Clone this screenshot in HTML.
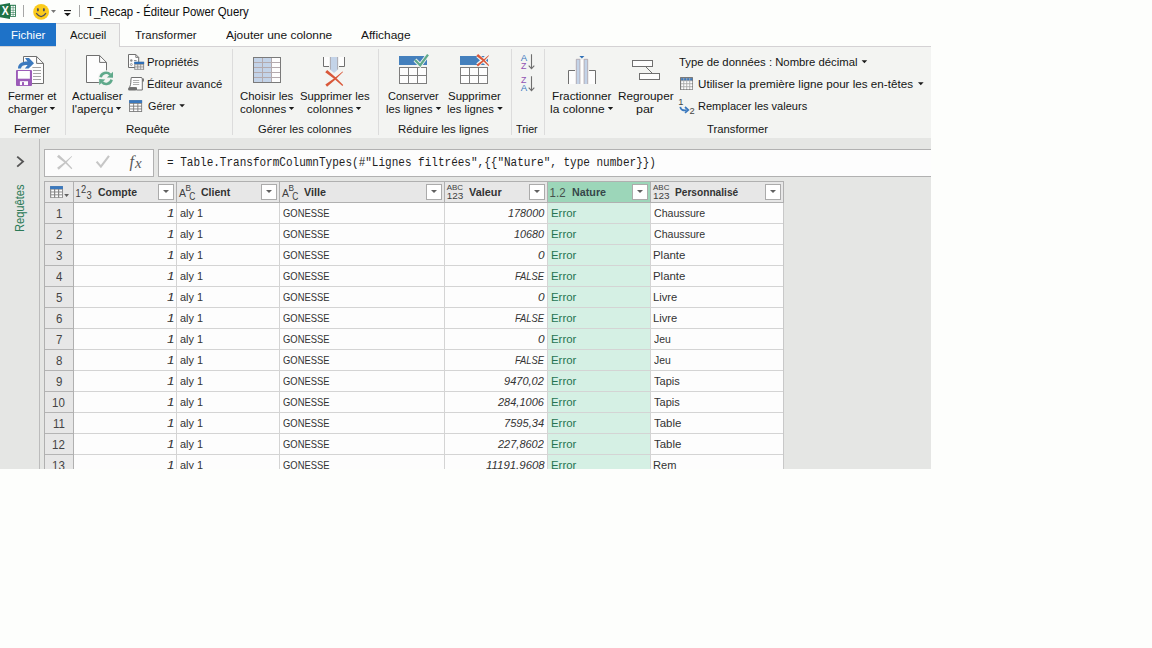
<!DOCTYPE html>
<html lang="fr"><head><meta charset="utf-8"><title>T_Recap - Éditeur Power Query</title>
<style>
*{box-sizing:border-box}
html,body{margin:0;padding:0;background:#fdfefc}
body{width:1152px;height:648px;overflow:hidden;position:relative;font-family:"Liberation Sans",sans-serif;font-size:12px;color:#222}
#app{position:absolute;left:0;top:0;width:931px;height:469px;overflow:hidden;background:#e5e6e4}
.t{position:absolute;white-space:pre;transform-origin:0 0;display:block}
svg{position:absolute;overflow:visible}
#titlebar{position:absolute;left:0;top:0;width:931px;height:23px;background:#fdfefc}
#tabs{position:absolute;left:0;top:23px;width:931px;height:24px;background:#fdfefc;border-bottom:1px solid #d4d2d4}
#tab-file{position:absolute;left:0;top:0;width:56px;height:23px;background:#1e72c8}
#tab-home{position:absolute;left:56px;top:0;width:64px;height:24px;background:#f3f4f2;border:1px solid #d4d2d4;border-bottom:none;border-left:none}
#ribbon{position:absolute;left:0;top:47px;width:931px;height:91px;background:#f3f4f2}
.sep{position:absolute;top:49px;width:1px;height:86px;background:#dcdcdc}
#side{position:absolute;left:0;top:138px;width:39px;height:331px;background:#e5e6e4}
#sideline{position:absolute;left:39px;top:139px;width:1px;height:330px;background:#bcbcbc}
#fxbtns{position:absolute;left:44px;top:149px;width:110px;height:28px;background:#fcfcfc;border:1px solid #b1b1b1}
#fxbox{position:absolute;left:158px;top:149px;width:780px;height:28px;background:#fdfdfd;border:1px solid #b1b1b1}
.hl{position:absolute;height:1px;background:#d4d4d4}
.vl{position:absolute;width:1px;background:#d4d4d4}
.fb{position:absolute;top:184px;width:16px;height:16px;background:#fff;border:1px solid #ababab}
.fb:after{content:"";position:absolute;left:3.6px;top:5.2px;border:3.5px solid transparent;border-top:3.5px solid #606060;border-bottom:none;width:0;height:0}
.side{transform-origin:0 0}
</style></head>
<body>
<div id="app">
<header id="titlebar"><svg style="left:0px;top:0px" width="96" height="23" viewBox="0 0 96 23" >
<polygon points="0,4.8 10,3.1 10,19 0,17.3" fill="#1f7246"/>
<rect x="10" y="4.8" width="5.9" height="12" fill="#1f7246"/>
<g fill="#fff"><rect x="10.8" y="5.8" width="2" height="1.8"/><rect x="13.3" y="5.8" width="1.8" height="1.8"/>
<rect x="10.8" y="8.1" width="2" height="1.8"/><rect x="13.3" y="8.1" width="1.8" height="1.8"/>
<rect x="10.8" y="10.4" width="2" height="1.8"/><rect x="13.3" y="10.4" width="1.8" height="1.8"/>
<rect x="10.8" y="12.7" width="2" height="1.8"/><rect x="13.3" y="12.7" width="1.8" height="1.8"/>
<rect x="10.8" y="15" width="2" height="1"/><rect x="13.3" y="15" width="1.8" height="1"/></g>
<text x="5.2" y="15.4" font-family="'Liberation Sans',sans-serif" font-weight="bold" font-size="12.4" fill="#fff" text-anchor="middle" textLength="7" lengthAdjust="spacingAndGlyphs">X</text>
<rect x="23" y="5" width="1" height="12" fill="#a6a6a6"/>
<circle cx="41.1" cy="11.9" r="7.9" fill="#fbcb1c"/>
<ellipse cx="37.9" cy="9.8" rx="1" ry="1.7" fill="#4b4c62"/><ellipse cx="43.9" cy="9.8" rx="1" ry="1.7" fill="#4b4c62"/>
<path d="M36.2 13.2 Q41.1 20 46 13.2" stroke="#4b4c62" stroke-width="1.3" fill="none"/>
<polygon points="51,10 56,10 53.5,12.9" fill="#777"/>
<rect x="64" y="10" width="7" height="1.15" fill="#1a1a1a"/>
<polygon points="64.2,12.9 70.8,12.9 67.5,16.3" fill="#1a1a1a"/>
<rect x="79" y="5" width="1" height="12" fill="#a6a6a6"/>
</svg><span class="t" style="left:87.14px;top:6px;font-size:12.6px;line-height:12.6px;color:#0c0c0c;transform:scaleX(0.9025);">T_Recap - Éditeur Power Query</span></header>
<nav class="w" aria-label="Onglets"><div id="tabs"><div id="tab-file"></div><div id="tab-home"></div></div>
<span class="t" style="left:10.54px;top:30px;font-size:11.3px;line-height:11.3px;color:#fff;transform:scaleX(1.0130);">Fichier</span>
<span class="t" style="left:70.14px;top:30px;font-size:11.3px;line-height:11.3px;color:#141414;transform:scaleX(0.9946);">Accueil</span>
<span class="t" style="left:134.55px;top:30px;font-size:11.3px;line-height:11.3px;color:#141414;transform:scaleX(1.0087);">Transformer</span>
<span class="t" style="left:226.13px;top:30px;font-size:11.3px;line-height:11.3px;color:#141414;transform:scaleX(1.0574);">Ajouter une colonne</span>
<span class="t" style="left:361.23px;top:30px;font-size:11.3px;line-height:11.3px;color:#141414;transform:scaleX(1.0568);">Affichage</span></nav>
<section class="w" aria-label="Ruban Accueil"><div id="ribbon"></div>
<div class="sep" style="left:65px"></div>
<div class="sep" style="left:232px"></div>
<div class="sep" style="left:378px"></div>
<div class="sep" style="left:511px"></div>
<div class="sep" style="left:544px"></div>
<svg style="left:0px;top:47px" width="931" height="91" viewBox="0 47 931 91" >
<path d="M23.5 56.5 H36.6 L43.5 63.4 V83.5 H23.5 Z" fill="#fdfdfd" stroke="#6f6f6f" stroke-width="1"/>
<path d="M36.6 56.5 V63.4 H43.5" fill="none" stroke="#6f6f6f" stroke-width="1"/>
<g stroke="#a4a4a4" stroke-width="1"><path d="M32.4 67.5 H41 M33 70.5 H41 M33 73.5 H41 M33 76.5 H41 M33 79.5 H41"/></g>
<rect x="22.6" y="63.8" width="2" height="6.4" fill="#f3f4f2"/>
<path d="M18 68.6 C18 63.8 21.5 61.6 27.5 61.6 L25 58.1 H29 L34 63.2 L28.6 68.6 H24.8 L27.6 65 C23.6 64.8 21.3 65.6 21 68.6 Z" fill="#3b79be"/>
<rect x="16" y="70" width="16" height="16" rx="1" fill="#9b5bb8"/>
<rect x="17.9" y="71" width="12" height="7.7" fill="#fdfdfd"/>
<rect x="19.9" y="81.2" width="8.1" height="3.9" fill="#fdfdfd"/>
<rect x="22" y="82.1" width="2" height="3" fill="#9b5bb8"/>

<path d="M86.5 55.5 H99.6 L106.5 62.4 V82.5 H86.5 Z" fill="#fdfdfd" stroke="#6f6f6f" stroke-width="1"/>
<path d="M99.6 55.5 V62.4 H106.5" fill="none" stroke="#6f6f6f" stroke-width="1"/>
<circle cx="106.1" cy="78.4" r="8.2" fill="#f3f4f2"/>
<path d="M100.6 77.2 A5.6 5.6 0 0 1 110.2 74.6" fill="none" stroke="#5fa98b" stroke-width="2.6"/>
<polygon points="113,71.8 113,77.8 106.9,77.4" fill="#5fa98b"/>
<path d="M111.6 79.6 A5.6 5.6 0 0 1 102 82.2" fill="none" stroke="#5fa98b" stroke-width="2.6"/>
<polygon points="99.2,85 99.2,79 105.3,79.4" fill="#5fa98b"/>

<path d="M128.5 54.5 H135.8 L138.7 57.4 V67.5 H128.5 Z" fill="#fdfdfd" stroke="#6f6f6f" stroke-width="1"/>
<path d="M135.8 54.5 V57.4 H138.7" fill="none" stroke="#6f6f6f" stroke-width="0.9"/>
<circle cx="131.3" cy="60.5" r="1.2" fill="#8a8a8a"/><circle cx="131.3" cy="64.5" r="1" fill="none" stroke="#8a8a8a" stroke-width="0.8"/>
<rect x="134" y="60" width="2.6" height="0.9" fill="#8a8a8a"/>
<rect x="134.3" y="61.8" width="9.8" height="8" fill="#858585"/>
<rect x="134.3" y="61.8" width="9.8" height="2.2" fill="#2f6fb6"/>
<g fill="#fdfdfd"><rect x="135.2" y="64.7" width="2.2" height="1.1"/><rect x="138.2" y="64.7" width="2.2" height="1.1"/><rect x="141.1" y="64.7" width="2.1" height="1.1"/>
<rect x="135.2" y="66.5" width="2.2" height="1.1"/><rect x="138.2" y="66.5" width="2.2" height="1.1"/><rect x="141.1" y="66.5" width="2.1" height="1.1"/>
<rect x="135.2" y="68.2" width="2.2" height="0.9"/><rect x="138.2" y="68.2" width="2.2" height="0.9"/><rect x="141.1" y="68.2" width="2.1" height="0.9"/></g>

<path d="M131.3 77.5 H141 Q142.3 77.5 142.3 78.8 V90 H136.5 V87.6 H129.2 C130.6 86 130.9 83 130.9 80 Z" fill="#fdfdfd" stroke="#6f6f6f" stroke-width="1"/>
<path d="M142.3 78.6 H143.9 V81.6 H142.3 Z" fill="#6f6f6f"/>
<rect x="128" y="87.5" width="8.7" height="3.1" rx="1.5" fill="#6f6f6f"/>
<g stroke="#a6a6a6" stroke-width="0.9"><path d="M133 80.5 H139.2 M133 82.5 H139.2 M133 84.5 H139.2"/></g>

<rect x="129.1" y="100.2" width="13" height="11.8" fill="#7d7d7d"/>
<rect x="129.1" y="100.2" width="13" height="2.8" fill="#3b79be"/>
<g fill="#fdfdfd"><rect x="130" y="103.8" width="3.2" height="1.9"/><rect x="134.1" y="103.8" width="3.3" height="1.9"/><rect x="138.3" y="103.8" width="2.9" height="1.9"/>
<rect x="130" y="106.6" width="3.2" height="1.9"/><rect x="134.1" y="106.6" width="3.3" height="1.9"/><rect x="138.3" y="106.6" width="2.9" height="1.9"/>
<rect x="130" y="109.4" width="3.2" height="1.7"/><rect x="134.1" y="109.4" width="3.3" height="1.7"/><rect x="138.3" y="109.4" width="2.9" height="1.7"/></g>

<rect x="253.5" y="57.5" width="27" height="25" fill="#fdfdfd"/>
<rect x="253.5" y="57.5" width="18" height="25" fill="#c3d3e8"/>
<g stroke="#b3aaae" stroke-width="1"><path d="M262.5 58 V82 M271.5 58 V82 M254 62.5 H280 M254 67.5 H280 M254 72.5 H280 M254 77.5 H280"/></g>
<rect x="253.5" y="57.5" width="27" height="25" fill="none" stroke="#7a7a7a" stroke-width="1"/>

<path d="M323.5 57 V66.5 H329.5 V57 Z M338.5 57 V66.5 H344.5 V57 Z" fill="#fdfdfd" stroke="none"/>
<path d="M323.5 57 V66.5 H329 M339 66.5 H344.5 V57" fill="none" stroke="#6f6f6f" stroke-width="1"/>
<path d="M330 57 H338 V69.5 L334 73 L330 69.5 Z" fill="#c3d3e8"/>
<path d="M330.4 57 V69.5 M337.6 57 V69.5" stroke="#aaa6ac" stroke-width="0.9" fill="none"/>
<path d="M325.22 72.33 Q334.39 78.52 342.39 86.08 L343.21 85.12 Q335.79 76.92 327.18 70.07 Z M327.07 86.64 Q335.55 79.91 343.01 71.95 L342.59 71.45 Q334.47 78.62 325.33 84.56 Z" fill="#d9583a"/>

<rect x="399" y="56" width="28" height="9" fill="#4480bd"/>
<rect x="399.5" y="67.5" width="27" height="16" fill="#fdfdfd" stroke="#7d7d7d" stroke-width="1"/>
<path d="M408.5 68 V83 M417.5 68 V83 M400 75.5 H426" stroke="#7d7d7d" stroke-width="1" fill="none"/>
<path d="M415 60 L420.2 65.2 L428 54.6" stroke="#f3f4f2" stroke-width="4" fill="none"/>
<path d="M415 60 L420.2 65.2 L428 54.6" stroke="#5fa98b" stroke-width="2.3" fill="none"/>
<rect x="460" y="56" width="28" height="9" fill="#4480bd"/>
<rect x="460.5" y="67.5" width="27" height="16" fill="#fdfdfd" stroke="#7d7d7d" stroke-width="1"/>
<path d="M469.5 68 V83 M478.5 68 V83 M461 75.5 H487" stroke="#7d7d7d" stroke-width="1" fill="none"/>
<path d="M477.6 55.4 L488.4 65.2 M488.2 55.8 L477.6 65" stroke="#f3f4f2" stroke-width="4" fill="none"/><path d="M476.32 55.96 Q482.98 60.32 488.43 66.00 L489.17 65.20 Q484.23 58.95 478.08 54.04 Z M477.97 66.48 Q484.00 61.70 488.99 55.72 L488.61 55.28 Q483.05 60.60 476.43 64.72 Z" fill="#d9583a"/><path d="M531.5 54.3 V68.9 M528.7 65.7 L531.5 68.60000000000001 L534.3 65.7" stroke="#6f6f6f" stroke-width="1.1" fill="none"/><path d="M531.5 76.3 V90.9 M528.7 87.7 L531.5 90.60000000000001 L534.3 87.7" stroke="#6f6f6f" stroke-width="1.1" fill="none"/><g font-family="'Liberation Sans',sans-serif" font-size="9.6" text-anchor="middle">
<text x="524" y="60.6" fill="#3b79be" textLength="6.4" lengthAdjust="spacingAndGlyphs">A</text>
<text x="523.6" y="69" fill="#9152b2" textLength="5.4" lengthAdjust="spacingAndGlyphs">Z</text>
<text x="523.6" y="83" fill="#9152b2" textLength="5.4" lengthAdjust="spacingAndGlyphs">Z</text>
<text x="524" y="91" fill="#3b79be" textLength="6.4" lengthAdjust="spacingAndGlyphs">A</text></g>
<path d="M568.5 84 V70.5 H575.5 V84 Z M588.5 84 V70.5 H595.5 V84 Z" fill="#fdfdfd"/>
<path d="M568.5 84 V70.5 H575 M589 70.5 H595.5 V84" fill="none" stroke="#6f6f6f" stroke-width="1"/>
<rect x="576" y="59" width="4.2" height="25" fill="#c3d3e8"/><rect x="583.8" y="59" width="4.2" height="25" fill="#c3d3e8"/>
<rect x="580.2" y="60" width="3.6" height="24" fill="#fdfdfd"/>
<path d="M576.3 84 V59.3 H579.9 V84 M584.1 84 V59.3 H587.7 V84" stroke="#b3a6aa" stroke-width="0.8" fill="none"/>
<polygon points="579.4,56 584.4,56 581.9,58.4" fill="#2f6fb6"/>

<rect x="632.5" y="60.5" width="20" height="6" fill="#fdfdfd" stroke="#6f6f6f" stroke-width="1"/>
<rect x="639.5" y="73.5" width="20" height="6" fill="#fdfdfd" stroke="#6f6f6f" stroke-width="1"/>
<path d="M646 67 L652 73" stroke="#6f6f6f" stroke-width="1" fill="none"/>
<rect x="680" y="77" width="13" height="13" fill="#a9a9a9"/><path d="M680.5 77.5 H692.5 V89.5 H680.5 Z" fill="none" stroke="#7a7a7a" stroke-width="1"/><rect x="681.2" y="78.2" width="2.1" height="2.1" fill="#3b79be"/><rect x="684.2" y="78.2" width="2.1" height="2.1" fill="#3b79be"/><rect x="687.2" y="78.2" width="2.1" height="2.1" fill="#3b79be"/><rect x="690.2" y="78.2" width="2.1" height="2.1" fill="#3b79be"/><rect x="681.2" y="81.2" width="2.1" height="2.1" fill="#fdfdfd"/><rect x="684.2" y="81.2" width="2.1" height="2.1" fill="#fdfdfd"/><rect x="687.2" y="81.2" width="2.1" height="2.1" fill="#fdfdfd"/><rect x="690.2" y="81.2" width="2.1" height="2.1" fill="#fdfdfd"/><rect x="681.2" y="84.2" width="2.1" height="2.1" fill="#fdfdfd"/><rect x="684.2" y="84.2" width="2.1" height="2.1" fill="#fdfdfd"/><rect x="687.2" y="84.2" width="2.1" height="2.1" fill="#fdfdfd"/><rect x="690.2" y="84.2" width="2.1" height="2.1" fill="#fdfdfd"/><rect x="681.2" y="87.2" width="2.1" height="2.1" fill="#fdfdfd"/><rect x="684.2" y="87.2" width="2.1" height="2.1" fill="#fdfdfd"/><rect x="687.2" y="87.2" width="2.1" height="2.1" fill="#fdfdfd"/><rect x="690.2" y="87.2" width="2.1" height="2.1" fill="#fdfdfd"/><g font-family="'Liberation Sans',sans-serif" font-size="9.3" fill="#444">
<text x="678.3" y="104.9">1</text><text x="689.6" y="113.7">2</text></g>
<path d="M680.3 106.8 C680.6 110 683 110.6 686.6 110.2" stroke="#3b79be" stroke-width="1.8" fill="none"/>
<path d="M685 107 L688.3 110 L685 112.8" stroke="#3b79be" stroke-width="1.7" fill="none"/>
<polygon points="49.6,107 55.2,107 52.400000000000006,110.1" fill="#1a1a1a"/><polygon points="115.8,107 121.2,107 118.5,110.1" fill="#1a1a1a"/><polygon points="179.3,104.2 184.9,104.2 182.10000000000002,107.3" fill="#1a1a1a"/><polygon points="288.8,107 294.2,107 291.5,110.1" fill="#1a1a1a"/><polygon points="355.8,107 361.2,107 358.5,110.1" fill="#1a1a1a"/><polygon points="435.7,107 441.2,107 438.45,110.1" fill="#1a1a1a"/><polygon points="497.2,107 502.8,107 500.0,110.1" fill="#1a1a1a"/><polygon points="607.8,107 613.2,107 610.5,110.1" fill="#1a1a1a"/><polygon points="861.6,60.2 867.2,60.2 864.4000000000001,63.300000000000004" fill="#1a1a1a"/><polygon points="918,82.2 923.6,82.2 920.8,85.3" fill="#1a1a1a"/></svg>
<span class="t" style="left:7.57px;top:91px;font-size:11.3px;line-height:11.3px;color:#141414;transform:scaleX(0.9900);">Fermer et</span>
<span class="t" style="left:8.30px;top:104px;font-size:11.3px;line-height:11.3px;color:#141414;transform:scaleX(1.0248);">charger</span>
<span class="t" style="left:14.46px;top:124px;font-size:11.3px;line-height:11.3px;color:#141414;transform:scaleX(0.9907);">Fermer</span>
<span class="t" style="left:71.94px;top:91px;font-size:11.3px;line-height:11.3px;color:#141414;transform:scaleX(1.0204);">Actualiser</span>
<span class="t" style="left:71.59px;top:104px;font-size:11.3px;line-height:11.3px;color:#141414;transform:scaleX(1.0520);">l'aperçu</span>
<span class="t" style="left:147.15px;top:57px;font-size:11.3px;line-height:11.3px;color:#141414;transform:scaleX(1.0036);">Propriétés</span>
<span class="t" style="left:147.16px;top:79px;font-size:11.3px;line-height:11.3px;color:#141414;transform:scaleX(0.9995);">Éditeur avancé</span>
<span class="t" style="left:147.50px;top:101px;font-size:11.3px;line-height:11.3px;color:#141414;transform:scaleX(0.9570);">Gérer</span>
<span class="t" style="left:125.63px;top:124px;font-size:11.3px;line-height:11.3px;color:#141414;transform:scaleX(1.0241);">Requête</span>
<span class="t" style="left:240.28px;top:91px;font-size:11.3px;line-height:11.3px;color:#141414;transform:scaleX(1.0105);">Choisir les</span>
<span class="t" style="left:239.60px;top:104px;font-size:11.3px;line-height:11.3px;color:#141414;transform:scaleX(1.0238);">colonnes</span>
<span class="t" style="left:299.60px;top:91px;font-size:11.3px;line-height:11.3px;color:#141414;transform:scaleX(0.9989);">Supprimer les</span>
<span class="t" style="left:306.50px;top:104px;font-size:11.3px;line-height:11.3px;color:#141414;transform:scaleX(1.0238);">colonnes</span>
<span class="t" style="left:258.29px;top:124px;font-size:11.3px;line-height:11.3px;color:#141414;transform:scaleX(0.9870);">Gérer les colonnes</span>
<span class="t" style="left:387.59px;top:91px;font-size:11.3px;line-height:11.3px;color:#141414;transform:scaleX(0.9728);">Conserver</span>
<span class="t" style="left:385.77px;top:104px;font-size:11.3px;line-height:11.3px;color:#141414;transform:scaleX(0.9894);">les lignes</span>
<span class="t" style="left:447.98px;top:91px;font-size:11.3px;line-height:11.3px;color:#141414;transform:scaleX(1.0135);">Supprimer</span>
<span class="t" style="left:446.56px;top:104px;font-size:11.3px;line-height:11.3px;color:#141414;transform:scaleX(0.9938);">les lignes</span>
<span class="t" style="left:397.64px;top:124px;font-size:11.3px;line-height:11.3px;color:#141414;transform:scaleX(1.0113);">Réduire les lignes</span>
<span class="t" style="left:516.16px;top:124px;font-size:11.3px;line-height:11.3px;color:#141414;transform:scaleX(0.9514);">Trier</span>
<span class="t" style="left:551.71px;top:91px;font-size:11.3px;line-height:11.3px;color:#141414;transform:scaleX(1.0417);">Fractionner</span>
<span class="t" style="left:550.38px;top:104px;font-size:11.3px;line-height:11.3px;color:#141414;transform:scaleX(1.0604);">la colonne</span>
<span class="t" style="left:617.91px;top:91px;font-size:11.3px;line-height:11.3px;color:#141414;transform:scaleX(1.0422);">Regrouper</span>
<span class="t" style="left:636.32px;top:104px;font-size:11.3px;line-height:11.3px;color:#141414;transform:scaleX(1.1027);">par</span>
<span class="t" style="left:679.25px;top:57px;font-size:11.3px;line-height:11.3px;color:#141414;transform:scaleX(1.0009);">Type de données : Nombre décimal</span>
<span class="t" style="left:697.85px;top:79px;font-size:11.3px;line-height:11.3px;color:#141414;transform:scaleX(1.0312);">Utiliser la première ligne pour les en-têtes</span>
<span class="t" style="left:697.98px;top:101px;font-size:11.3px;line-height:11.3px;color:#141414;transform:scaleX(0.9770);">Remplacer les valeurs</span>
<span class="t" style="left:707.15px;top:124px;font-size:11.3px;line-height:11.3px;color:#141414;transform:scaleX(0.9972);">Transformer</span></section>
<aside class="w" aria-label="Requêtes"><div id="side"></div><div id="sideline"></div>
<svg style="left:10px;top:150px" width="20" height="24" viewBox="10 150 20 24" ><path d="M17.2 156.6 L23 161.6 L17.2 166.6" stroke="#555" stroke-width="1.9" fill="none"/></svg>
<span class="t side" style="left:13.6px;top:232px;font-size:12.6px;line-height:12.6px;color:#2c7a57;transform:rotate(-90deg) scaleX(0.8809)">Requêtes</span></aside>
<div class="w" id="formulabar"><div id="fxbtns"></div><div id="fxbox"></div>
<svg style="left:44px;top:149px" width="110" height="28" viewBox="44 149 110 28" >
<path d="M56.95 156.83 Q64.84 162.37 71.50 169.23 L72.30 168.37 Q66.19 160.91 58.85 154.77 Z M58.74 169.74 Q65.95 163.73 72.11 156.53 L71.69 156.07 Q64.91 162.56 57.06 167.86 Z" fill="#c6c6c6"/>
<path d="M96.6 161.6 L100.9 166.6 L109 155.8" stroke="#c6c6c6" stroke-width="2.1" fill="none"/>
<text font-family="'Liberation Serif',serif" font-style="italic" fill="#585858"><tspan x="129.6" y="166.8" font-size="16">f</tspan><tspan x="135" y="168" font-size="15">x</tspan></text>
</svg>
<span class="t" style="left:167.47px;top:157px;font-size:12px;line-height:12px;color:#1e1e1e;font-family:'Liberation Mono', monospace;transform:scaleX(0.9176);">= Table.TransformColumnTypes(#"Lignes filtrées",{{"Nature", type number}})</span></div>
<div class="w" id="grid" role="table">
<div style="position:absolute;left:73px;top:202px;width:711px;height:270px;background:#fdfdfd"></div>
<div style="position:absolute;left:44px;top:181px;width:740px;height:22px;background:#e7e7e7;border:1px solid #b0b0b0"></div>
<div style="position:absolute;left:44px;top:203px;width:30px;height:270px;background:#e7e7e7;border-left:1px solid #b0b0b0;border-right:1px solid #b0b0b0"></div>
<div style="position:absolute;left:548px;top:182px;width:102px;height:20px;background:#9cd6b9"></div>
<div style="position:absolute;left:548px;top:203px;width:102px;height:270px;background:#d5f0e4"></div>
<div class="hl" style="left:74px;top:223px;width:709px"></div>
<div class="hl" style="left:45px;top:223px;width:28px;background:#b4b4b4"></div>
<div class="hl" style="left:74px;top:244px;width:709px"></div>
<div class="hl" style="left:45px;top:244px;width:28px;background:#b4b4b4"></div>
<div class="hl" style="left:74px;top:265px;width:709px"></div>
<div class="hl" style="left:45px;top:265px;width:28px;background:#b4b4b4"></div>
<div class="hl" style="left:74px;top:286px;width:709px"></div>
<div class="hl" style="left:45px;top:286px;width:28px;background:#b4b4b4"></div>
<div class="hl" style="left:74px;top:307px;width:709px"></div>
<div class="hl" style="left:45px;top:307px;width:28px;background:#b4b4b4"></div>
<div class="hl" style="left:74px;top:328px;width:709px"></div>
<div class="hl" style="left:45px;top:328px;width:28px;background:#b4b4b4"></div>
<div class="hl" style="left:74px;top:349px;width:709px"></div>
<div class="hl" style="left:45px;top:349px;width:28px;background:#b4b4b4"></div>
<div class="hl" style="left:74px;top:370px;width:709px"></div>
<div class="hl" style="left:45px;top:370px;width:28px;background:#b4b4b4"></div>
<div class="hl" style="left:74px;top:391px;width:709px"></div>
<div class="hl" style="left:45px;top:391px;width:28px;background:#b4b4b4"></div>
<div class="hl" style="left:74px;top:412px;width:709px"></div>
<div class="hl" style="left:45px;top:412px;width:28px;background:#b4b4b4"></div>
<div class="hl" style="left:74px;top:433px;width:709px"></div>
<div class="hl" style="left:45px;top:433px;width:28px;background:#b4b4b4"></div>
<div class="hl" style="left:74px;top:454px;width:709px"></div>
<div class="hl" style="left:45px;top:454px;width:28px;background:#b4b4b4"></div>
<div class="hl" style="left:74px;top:475px;width:709px"></div>
<div class="hl" style="left:45px;top:475px;width:28px;background:#b4b4b4"></div>
<div class="vl" style="left:176px;top:203px;height:270px"></div>
<div class="vl" style="left:176px;top:182px;height:20px;background:#b0b0b0"></div>
<div class="vl" style="left:279px;top:203px;height:270px"></div>
<div class="vl" style="left:279px;top:182px;height:20px;background:#b0b0b0"></div>
<div class="vl" style="left:444px;top:203px;height:270px"></div>
<div class="vl" style="left:444px;top:182px;height:20px;background:#b0b0b0"></div>
<div class="vl" style="left:547px;top:203px;height:270px"></div>
<div class="vl" style="left:547px;top:182px;height:20px;background:#b0b0b0"></div>
<div class="vl" style="left:650px;top:203px;height:270px"></div>
<div class="vl" style="left:650px;top:182px;height:20px;background:#b0b0b0"></div>
<div class="vl" style="left:73px;top:182px;height:20px;background:#b0b0b0"></div>
<div class="vl" style="left:783px;top:203px;height:270px;background:#c8c8c8"></div>
<div class="w" role="row">
<div class="fb" style="left:158px"></div>
<div class="fb" style="left:261px"></div>
<div class="fb" style="left:426px"></div>
<div class="fb" style="left:529px"></div>
<div class="fb" style="left:632px"></div>
<div class="fb" style="left:765px"></div>
<svg style="left:44px;top:181px" width="740" height="22" viewBox="44 181 740 22" ><rect x="50.1" y="186.1" width="12.8" height="11.8" fill="#878787"/><rect x="50.1" y="186.1" width="12.8" height="3" fill="#3b79be"/><rect x="51.2" y="189.6" width="2.8" height="1.9" fill="#fdfdfd"/><rect x="55.2" y="189.6" width="2.8" height="1.9" fill="#fdfdfd"/><rect x="59.2" y="189.6" width="2.8" height="1.9" fill="#fdfdfd"/><rect x="51.2" y="192.45" width="2.8" height="1.9" fill="#fdfdfd"/><rect x="55.2" y="192.45" width="2.8" height="1.9" fill="#fdfdfd"/><rect x="59.2" y="192.45" width="2.8" height="1.9" fill="#fdfdfd"/><rect x="51.2" y="195.29999999999998" width="2.8" height="1.9" fill="#fdfdfd"/><rect x="55.2" y="195.29999999999998" width="2.8" height="1.9" fill="#fdfdfd"/><rect x="59.2" y="195.29999999999998" width="2.8" height="1.9" fill="#fdfdfd"/><polygon points="64.2,194.1 69,194.1 66.6,196.9" fill="#606060"/><g font-family="'Liberation Sans',sans-serif" font-size="10.8" fill="#3c3c3c"><text x="75.4" y="196.9" textLength="5.2" lengthAdjust="spacingAndGlyphs">1</text><text x="80.9" y="193" textLength="5.2" lengthAdjust="spacingAndGlyphs">2</text><text x="86.4" y="199" textLength="5.2" lengthAdjust="spacingAndGlyphs">3</text></g><g font-family="'Liberation Sans',sans-serif" fill="#404040"><text x="179.1" y="196.8" font-size="10.5" textLength="7" lengthAdjust="spacingAndGlyphs">A</text><text x="185.5" y="191.1" font-size="9.6" textLength="5.5" lengthAdjust="spacingAndGlyphs">B</text><text x="189.3" y="200" font-size="10.4" textLength="6.1" lengthAdjust="spacingAndGlyphs">C</text></g><g font-family="'Liberation Sans',sans-serif" fill="#404040"><text x="282.1" y="196.8" font-size="10.5" textLength="7" lengthAdjust="spacingAndGlyphs">A</text><text x="288.5" y="191.1" font-size="9.6" textLength="5.5" lengthAdjust="spacingAndGlyphs">B</text><text x="292.3" y="200" font-size="10.4" textLength="6.1" lengthAdjust="spacingAndGlyphs">C</text></g><g font-family="'Liberation Sans',sans-serif" fill="#3e3e3e"><text x="446.7" y="189.9" font-size="7.6" textLength="16.4" lengthAdjust="spacingAndGlyphs">ABC</text><text x="446.7" y="198.8" font-size="8.4" textLength="16.6" lengthAdjust="spacingAndGlyphs">123</text></g><g font-family="'Liberation Sans',sans-serif" fill="#3e3e3e"><text x="653" y="189.9" font-size="7.6" textLength="16.4" lengthAdjust="spacingAndGlyphs">ABC</text><text x="653" y="198.8" font-size="8.4" textLength="16.6" lengthAdjust="spacingAndGlyphs">123</text></g><text x="549.6" y="196.8" font-family="'Liberation Sans',sans-serif" font-size="12.6" fill="#46504c" textLength="16" lengthAdjust="spacingAndGlyphs">1.2</text></svg>
<span class="t" style="left:98.25px;top:187px;font-size:11.3px;line-height:11.3px;font-weight:bold;color:#333;transform:scaleX(0.9264);">Compte</span>
<span class="t" style="left:200.95px;top:187px;font-size:11.3px;line-height:11.3px;font-weight:bold;color:#333;transform:scaleX(0.9312);">Client</span>
<span class="t" style="left:304.04px;top:187px;font-size:11.3px;line-height:11.3px;font-weight:bold;color:#333;transform:scaleX(0.9534);">Ville</span>
<span class="t" style="left:469.04px;top:187px;font-size:11.3px;line-height:11.3px;font-weight:bold;color:#333;transform:scaleX(0.9641);">Valeur</span>
<span class="t" style="left:572.23px;top:187px;font-size:11.3px;line-height:11.3px;font-weight:bold;color:#36474a;transform:scaleX(0.9512);">Nature</span>
<span class="t" style="left:675.29px;top:187px;font-size:11.3px;line-height:11.3px;font-weight:bold;color:#333;transform:scaleX(0.8984);">Personnalisé</span>
</div>
<div class="w" role="row"><span class="t rn" style="left:55.60px;top:208px;font-size:12.4px;line-height:12.4px;color:#444;transform:scaleX(0.9300);">1</span>
<span class="t c1" style="left:166.65px;top:208px;font-size:11px;line-height:11px;font-style:italic;color:#333;transform:scaleX(1.2231);">1</span>
<span class="t c2" style="left:179.72px;top:208px;font-size:11px;line-height:11px;color:#333;transform:scaleX(0.9932);">aly 1</span>
<span class="t c3" style="left:282.94px;top:208px;font-size:11px;line-height:11px;color:#333;transform:scaleX(0.8558);">GONESSE</span>
<span class="t c4" style="left:507.72px;top:208px;font-size:11px;line-height:11px;font-style:italic;color:#333;transform:scaleX(0.9864);">178000</span>
<span class="t c5" style="left:550.92px;top:208px;font-size:11px;line-height:11px;color:#257352;transform:scaleX(1.0341);">Error</span>
<span class="t c6" style="left:653.60px;top:208px;font-size:11px;line-height:11px;color:#333;transform:scaleX(0.9638);">Chaussure</span></div>
<div class="w" role="row"><span class="t rn" style="left:55.62px;top:229px;font-size:12.4px;line-height:12.4px;color:#444;transform:scaleX(0.9300);">2</span>
<span class="t c1" style="left:166.65px;top:229px;font-size:11px;line-height:11px;font-style:italic;color:#333;transform:scaleX(1.2231);">1</span>
<span class="t c2" style="left:179.72px;top:229px;font-size:11px;line-height:11px;color:#333;transform:scaleX(0.9932);">aly 1</span>
<span class="t c3" style="left:282.94px;top:229px;font-size:11px;line-height:11px;color:#333;transform:scaleX(0.8558);">GONESSE</span>
<span class="t c4" style="left:513.72px;top:229px;font-size:11px;line-height:11px;font-style:italic;color:#333;transform:scaleX(0.9837);">10680</span>
<span class="t c5" style="left:550.92px;top:229px;font-size:11px;line-height:11px;color:#257352;transform:scaleX(1.0341);">Error</span>
<span class="t c6" style="left:653.60px;top:229px;font-size:11px;line-height:11px;color:#333;transform:scaleX(0.9638);">Chaussure</span></div>
<div class="w" role="row"><span class="t rn" style="left:55.58px;top:250px;font-size:12.4px;line-height:12.4px;color:#444;transform:scaleX(0.9300);">3</span>
<span class="t c1" style="left:166.65px;top:250px;font-size:11px;line-height:11px;font-style:italic;color:#333;transform:scaleX(1.2231);">1</span>
<span class="t c2" style="left:179.72px;top:250px;font-size:11px;line-height:11px;color:#333;transform:scaleX(0.9932);">aly 1</span>
<span class="t c3" style="left:282.94px;top:250px;font-size:11px;line-height:11px;color:#333;transform:scaleX(0.8558);">GONESSE</span>
<span class="t c4" style="left:537.69px;top:250px;font-size:11px;line-height:11px;font-style:italic;color:#333;transform:scaleX(1.0763);">0</span>
<span class="t c5" style="left:550.92px;top:250px;font-size:11px;line-height:11px;color:#257352;transform:scaleX(1.0341);">Error</span>
<span class="t c6" style="left:652.82px;top:250px;font-size:11px;line-height:11px;color:#333;transform:scaleX(1.0379);">Plante</span></div>
<div class="w" role="row"><span class="t rn" style="left:55.96px;top:271px;font-size:12.4px;line-height:12.4px;color:#444;transform:scaleX(0.9300);">4</span>
<span class="t c1" style="left:166.65px;top:271px;font-size:11px;line-height:11px;font-style:italic;color:#333;transform:scaleX(1.2231);">1</span>
<span class="t c2" style="left:179.72px;top:271px;font-size:11px;line-height:11px;color:#333;transform:scaleX(0.9932);">aly 1</span>
<span class="t c3" style="left:282.94px;top:271px;font-size:11px;line-height:11px;color:#333;transform:scaleX(0.8558);">GONESSE</span>
<span class="t c4" style="left:515.18px;top:271px;font-size:11px;line-height:11px;font-style:italic;color:#333;transform:scaleX(0.8509);">FALSE</span>
<span class="t c5" style="left:550.92px;top:271px;font-size:11px;line-height:11px;color:#257352;transform:scaleX(1.0341);">Error</span>
<span class="t c6" style="left:652.82px;top:271px;font-size:11px;line-height:11px;color:#333;transform:scaleX(1.0379);">Plante</span></div>
<div class="w" role="row"><span class="t rn" style="left:55.59px;top:292px;font-size:12.4px;line-height:12.4px;color:#444;transform:scaleX(0.9300);">5</span>
<span class="t c1" style="left:166.65px;top:292px;font-size:11px;line-height:11px;font-style:italic;color:#333;transform:scaleX(1.2231);">1</span>
<span class="t c2" style="left:179.72px;top:292px;font-size:11px;line-height:11px;color:#333;transform:scaleX(0.9932);">aly 1</span>
<span class="t c3" style="left:282.94px;top:292px;font-size:11px;line-height:11px;color:#333;transform:scaleX(0.8558);">GONESSE</span>
<span class="t c4" style="left:537.69px;top:292px;font-size:11px;line-height:11px;font-style:italic;color:#333;transform:scaleX(1.0763);">0</span>
<span class="t c5" style="left:550.92px;top:292px;font-size:11px;line-height:11px;color:#257352;transform:scaleX(1.0341);">Error</span>
<span class="t c6" style="left:652.82px;top:292px;font-size:11px;line-height:11px;color:#333;transform:scaleX(1.0157);">Livre</span></div>
<div class="w" role="row"><span class="t rn" style="left:55.61px;top:313px;font-size:12.4px;line-height:12.4px;color:#444;transform:scaleX(0.9300);">6</span>
<span class="t c1" style="left:166.65px;top:313px;font-size:11px;line-height:11px;font-style:italic;color:#333;transform:scaleX(1.2231);">1</span>
<span class="t c2" style="left:179.72px;top:313px;font-size:11px;line-height:11px;color:#333;transform:scaleX(0.9932);">aly 1</span>
<span class="t c3" style="left:282.94px;top:313px;font-size:11px;line-height:11px;color:#333;transform:scaleX(0.8558);">GONESSE</span>
<span class="t c4" style="left:515.18px;top:313px;font-size:11px;line-height:11px;font-style:italic;color:#333;transform:scaleX(0.8509);">FALSE</span>
<span class="t c5" style="left:550.92px;top:313px;font-size:11px;line-height:11px;color:#257352;transform:scaleX(1.0341);">Error</span>
<span class="t c6" style="left:652.82px;top:313px;font-size:11px;line-height:11px;color:#333;transform:scaleX(1.0157);">Livre</span></div>
<div class="w" role="row"><span class="t rn" style="left:55.62px;top:334px;font-size:12.4px;line-height:12.4px;color:#444;transform:scaleX(0.9300);">7</span>
<span class="t c1" style="left:166.65px;top:334px;font-size:11px;line-height:11px;font-style:italic;color:#333;transform:scaleX(1.2231);">1</span>
<span class="t c2" style="left:179.72px;top:334px;font-size:11px;line-height:11px;color:#333;transform:scaleX(0.9932);">aly 1</span>
<span class="t c3" style="left:282.94px;top:334px;font-size:11px;line-height:11px;color:#333;transform:scaleX(0.8558);">GONESSE</span>
<span class="t c4" style="left:537.69px;top:334px;font-size:11px;line-height:11px;font-style:italic;color:#333;transform:scaleX(1.0763);">0</span>
<span class="t c5" style="left:550.92px;top:334px;font-size:11px;line-height:11px;color:#257352;transform:scaleX(1.0341);">Error</span>
<span class="t c6" style="left:653.72px;top:334px;font-size:11px;line-height:11px;color:#333;transform:scaleX(0.9458);">Jeu</span></div>
<div class="w" role="row"><span class="t rn" style="left:55.94px;top:355px;font-size:12.4px;line-height:12.4px;color:#444;transform:scaleX(0.9300);">8</span>
<span class="t c1" style="left:166.65px;top:355px;font-size:11px;line-height:11px;font-style:italic;color:#333;transform:scaleX(1.2231);">1</span>
<span class="t c2" style="left:179.72px;top:355px;font-size:11px;line-height:11px;color:#333;transform:scaleX(0.9932);">aly 1</span>
<span class="t c3" style="left:282.94px;top:355px;font-size:11px;line-height:11px;color:#333;transform:scaleX(0.8558);">GONESSE</span>
<span class="t c4" style="left:515.18px;top:355px;font-size:11px;line-height:11px;font-style:italic;color:#333;transform:scaleX(0.8509);">FALSE</span>
<span class="t c5" style="left:550.92px;top:355px;font-size:11px;line-height:11px;color:#257352;transform:scaleX(1.0341);">Error</span>
<span class="t c6" style="left:653.72px;top:355px;font-size:11px;line-height:11px;color:#333;transform:scaleX(0.9458);">Jeu</span></div>
<div class="w" role="row"><span class="t rn" style="left:55.59px;top:376px;font-size:12.4px;line-height:12.4px;color:#444;transform:scaleX(0.9300);">9</span>
<span class="t c1" style="left:166.65px;top:376px;font-size:11px;line-height:11px;font-style:italic;color:#333;transform:scaleX(1.2231);">1</span>
<span class="t c2" style="left:179.72px;top:376px;font-size:11px;line-height:11px;color:#333;transform:scaleX(0.9932);">aly 1</span>
<span class="t c3" style="left:282.94px;top:376px;font-size:11px;line-height:11px;color:#333;transform:scaleX(0.8558);">GONESSE</span>
<span class="t c4" style="left:504.09px;top:376px;font-size:11px;line-height:11px;font-style:italic;color:#333;transform:scaleX(1.0025);">9470,02</span>
<span class="t c5" style="left:550.92px;top:376px;font-size:11px;line-height:11px;color:#257352;transform:scaleX(1.0341);">Error</span>
<span class="t c6" style="left:653.65px;top:376px;font-size:11px;line-height:11px;color:#333;transform:scaleX(1.0022);">Tapis</span></div>
<div class="w" role="row"><span class="t rn" style="left:52.33px;top:397px;font-size:12.4px;line-height:12.4px;color:#444;transform:scaleX(0.9300);">10</span>
<span class="t c1" style="left:166.65px;top:397px;font-size:11px;line-height:11px;font-style:italic;color:#333;transform:scaleX(1.2231);">1</span>
<span class="t c2" style="left:179.72px;top:397px;font-size:11px;line-height:11px;color:#333;transform:scaleX(0.9932);">aly 1</span>
<span class="t c3" style="left:282.94px;top:397px;font-size:11px;line-height:11px;color:#333;transform:scaleX(0.8558);">GONESSE</span>
<span class="t c4" style="left:498.21px;top:397px;font-size:11px;line-height:11px;font-style:italic;color:#333;transform:scaleX(1.0006);">284,1006</span>
<span class="t c5" style="left:550.92px;top:397px;font-size:11px;line-height:11px;color:#257352;transform:scaleX(1.0341);">Error</span>
<span class="t c6" style="left:653.65px;top:397px;font-size:11px;line-height:11px;color:#333;transform:scaleX(1.0022);">Tapis</span></div>
<div class="w" role="row"><span class="t rn" style="left:52.81px;top:418px;font-size:12.4px;line-height:12.4px;color:#444;transform:scaleX(0.9300);">11</span>
<span class="t c1" style="left:166.65px;top:418px;font-size:11px;line-height:11px;font-style:italic;color:#333;transform:scaleX(1.2231);">1</span>
<span class="t c2" style="left:179.72px;top:418px;font-size:11px;line-height:11px;color:#333;transform:scaleX(0.9932);">aly 1</span>
<span class="t c3" style="left:282.94px;top:418px;font-size:11px;line-height:11px;color:#333;transform:scaleX(0.8558);">GONESSE</span>
<span class="t c4" style="left:503.86px;top:418px;font-size:11px;line-height:11px;font-style:italic;color:#333;transform:scaleX(1.0105);">7595,34</span>
<span class="t c5" style="left:550.92px;top:418px;font-size:11px;line-height:11px;color:#257352;transform:scaleX(1.0341);">Error</span>
<span class="t c6" style="left:653.64px;top:418px;font-size:11px;line-height:11px;color:#333;transform:scaleX(1.0404);">Table</span></div>
<div class="w" role="row"><span class="t rn" style="left:52.35px;top:439px;font-size:12.4px;line-height:12.4px;color:#444;transform:scaleX(0.9300);">12</span>
<span class="t c1" style="left:166.65px;top:439px;font-size:11px;line-height:11px;font-style:italic;color:#333;transform:scaleX(1.2231);">1</span>
<span class="t c2" style="left:179.72px;top:439px;font-size:11px;line-height:11px;color:#333;transform:scaleX(0.9932);">aly 1</span>
<span class="t c3" style="left:282.94px;top:439px;font-size:11px;line-height:11px;color:#333;transform:scaleX(0.8558);">GONESSE</span>
<span class="t c4" style="left:498.21px;top:439px;font-size:11px;line-height:11px;font-style:italic;color:#333;transform:scaleX(0.9994);">227,8602</span>
<span class="t c5" style="left:550.92px;top:439px;font-size:11px;line-height:11px;color:#257352;transform:scaleX(1.0341);">Error</span>
<span class="t c6" style="left:653.64px;top:439px;font-size:11px;line-height:11px;color:#333;transform:scaleX(1.0404);">Table</span></div>
<div class="w" role="row"><span class="t rn" style="left:52.35px;top:460px;font-size:12.4px;line-height:12.4px;color:#444;transform:scaleX(0.9300);">13</span>
<span class="t c1" style="left:166.65px;top:460px;font-size:11px;line-height:11px;font-style:italic;color:#333;transform:scaleX(1.2231);">1</span>
<span class="t c2" style="left:179.72px;top:460px;font-size:11px;line-height:11px;color:#333;transform:scaleX(0.9932);">aly 1</span>
<span class="t c3" style="left:282.94px;top:460px;font-size:11px;line-height:11px;color:#333;transform:scaleX(0.8558);">GONESSE</span>
<span class="t c4" style="left:485.90px;top:460px;font-size:11px;line-height:11px;font-style:italic;color:#333;transform:scaleX(1.0396);">11191,9608</span>
<span class="t c5" style="left:550.92px;top:460px;font-size:11px;line-height:11px;color:#257352;transform:scaleX(1.0341);">Error</span>
<span class="t c6" style="left:652.85px;top:460px;font-size:11px;line-height:11px;color:#333;transform:scaleX(1.0091);">Rem</span></div>
</div>
</div>
</body></html>
